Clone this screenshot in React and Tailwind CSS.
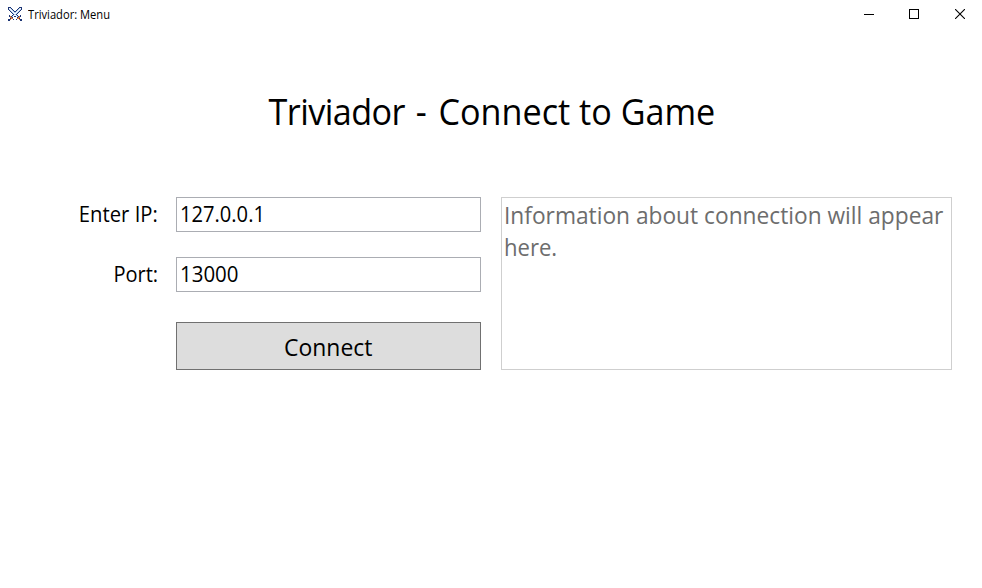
const PIXELS = [
  "nnn........nnn",
  "nwbn......nbwn",
  "nbwbn....nbwbn",
  ".nbwbn..nbwbn.",
  "..nbwbnnbwbn..",
  "...nbwbbwbn...",
  "....nbwwbn....",
  ".....nbbn.....",
  ".n..nbwwbn..n.",
  ".nonbwnnwbnon.",
  "..oon....noo..",
  "..noo....oon..",
  "nno..n..n..onn",
  "nn..........nn",
];

const COLORS = { n: "#1c3474", w: "#ffffff", b: "#b4cdec", o: "#d9773a" };

function SwordsIcon() {
  return (
    <svg className="h-3.5 w-3.5 shrink-0" viewBox="0 0 14 14" shapeRendering="crispEdges">
      {PIXELS.flatMap((row, y) =>
        [...row].map((c, x) =>
          c === "." ? null : <rect key={`${x}-${y}`} x={x} y={y} width="1" height="1" fill={COLORS[c]} />
        )
      )}
    </svg>
  );
}

function TitleBar() {
  return (
    <header className="flex h-7 items-center pr-[17px] pl-2">
      <SwordsIcon />
      <span className="ml-1.5 flex-1 origin-left scale-x-[.93] pt-[2px] text-[12px] leading-4">Triviador: Menu</span>
      <svg className="h-2.5 w-2.5" viewBox="0 0 10 10" fill="none" stroke="#000" shapeRendering="crispEdges">
        <path d="M0 5.5H10" />
      </svg>
      <svg className="ml-[35px] h-2.5 w-2.5" viewBox="0 0 10 10" fill="none" stroke="#000" shapeRendering="crispEdges">
        <rect x=".5" y=".5" width="9" height="9" />
      </svg>
      <svg className="ml-9 h-2.5 w-2.5" viewBox="0 0 10 10" fill="none" stroke="#000" strokeWidth="1.1">
        <path d="M0 0L10 10M10 0L0 10" />
      </svg>
    </header>
  );
}

export default function App() {
  return (
    <div className="h-[588px] w-[982px] overflow-hidden bg-white font-['Open_Sans','Noto_Sans',sans-serif] font-[370] text-black">
      <TitleBar />
      <main className="pt-[60px]">
        <h1 className="scale-x-[.949] pl-[2px] text-center text-[36px] leading-[48px] font-[370]">
          <span className="tracking-[-0.6px]">Triviador</span> <span className="mr-[3px] ml-[2px]">-</span> Connect to Game
        </h1>
        <div className="mt-[61px] flex pl-[58px]">
          <div className="mr-[18px] w-[100px] text-right text-[22px] leading-8">
            <div><span className="inline-block origin-right scale-x-[.92]">Enter IP:</span></div>
            <div className="mt-7"><span className="inline-block origin-right scale-x-[.91]">Port:</span></div>
          </div>
          <div className="w-[305px]">
            <div className="h-[35px] border border-[#abadb3] pl-[3px] text-[22px] leading-[31px]"><span className="inline-block origin-left scale-x-[.915]">127.0.0.1</span></div>
            <div className="mt-[25px] h-[35px] border border-[#abadb3] pl-[3px] text-[22px] leading-[31px]"><span className="inline-block origin-left scale-x-[.93]">13000</span></div>
            <button className="mt-[30px] block h-12 w-full border border-[#707070] bg-[#dddddd] pt-[2px] text-[24px] leading-[44px]"><span className="inline-block scale-x-[.955]">Connect</span></button>
          </div>
          <div className="ml-5 h-[173px] w-[451px] border border-[#cfcfcf] pt-px pl-[2px] text-[24px] leading-8 text-[#6d6d6d]">
            <div className="origin-left scale-x-[.947] whitespace-nowrap">Information about connection will appear</div>
            <div className="origin-left scale-x-[.92]">here.</div>
          </div>
        </div>
      </main>
    </div>
  );
}
